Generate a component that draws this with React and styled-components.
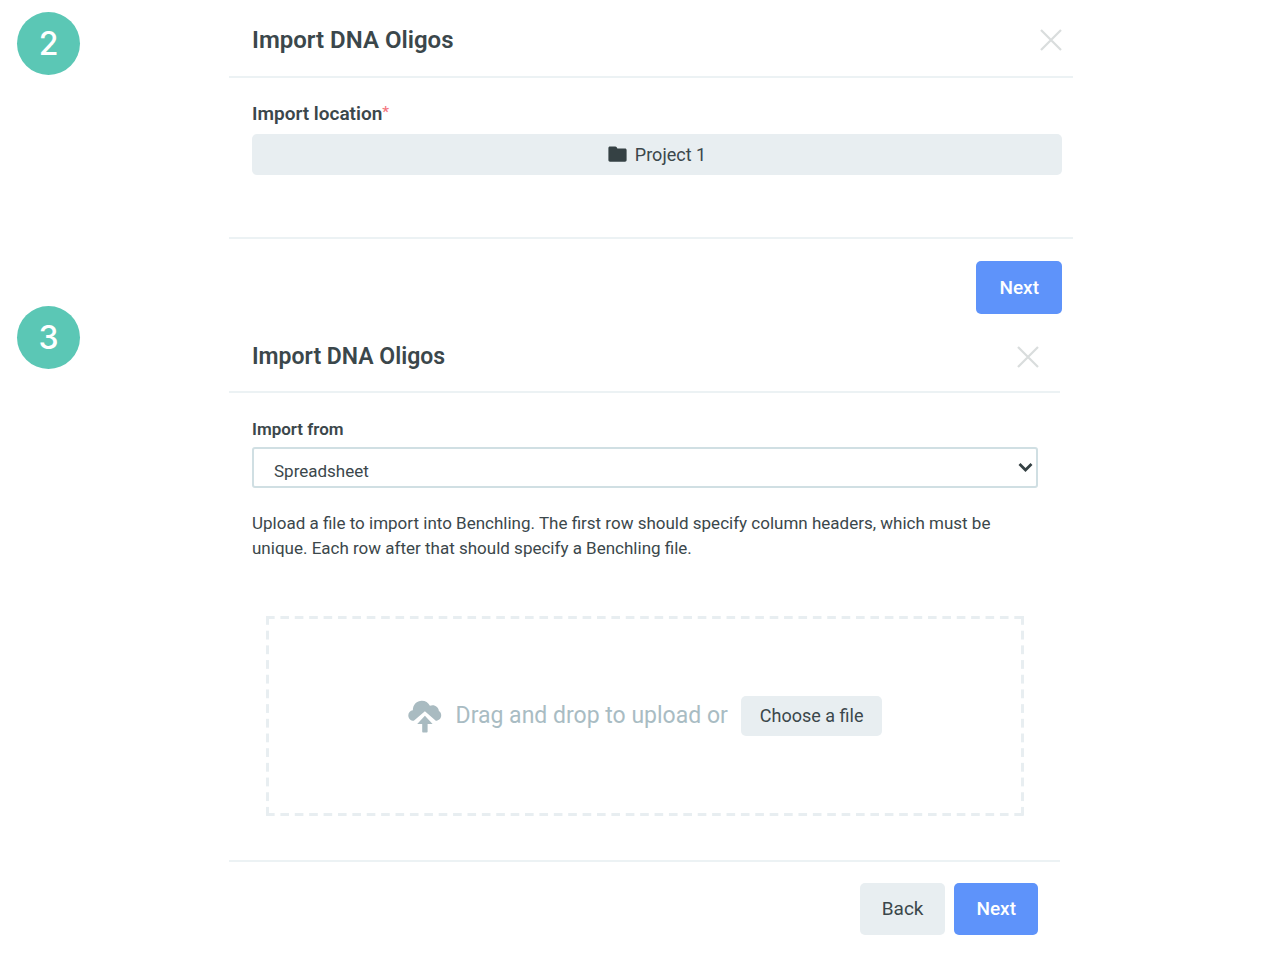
import styled, { createGlobalStyle } from "styled-components";

const GlobalStyle = createGlobalStyle`
  * {
    box-sizing: border-box;
  }
  body {
    margin: 0;
    background: #fff;
    color: #3b474b;
    font-family: Roboto, Lato, sans-serif;
  }
  button,
  select {
    font-family: inherit;
    color: inherit;
  }
`;

const Page = styled.main`
  padding: 12px 0 0 17px;
`;

const Step = styled.section`
  display: flex;
  align-items: flex-start;
  gap: 149px;
  padding-right: ${(props) => props.$end};

  & + & {
    margin-top: -8px;
  }
`;

const Badge = styled.div`
  display: flex;
  align-items: center;
  justify-content: center;
  flex: none;
  width: 63px;
  height: 63px;
  border-radius: 50%;
  background: #5bc7b5;
  color: #fff;
  font-family: Inter, sans-serif;
  font-size: 32px;
  font-weight: 500;
  line-height: 40px;
`;

const Panel = styled.div`
  flex: 1;
  min-width: 0;
`;

const Header = styled.header`
  display: flex;
  align-items: center;
  justify-content: space-between;
  height: ${(props) => props.$height};
  padding: ${(props) => props.$pad};
  border-bottom: 2px solid #ecf2f4;
`;

const Title = styled.h2`
  margin: 0;
  font-size: ${(props) => props.$size};
  font-weight: 600;
  line-height: 30px;
`;

const CloseButton = styled.button`
  display: flex;
  padding: 0;
  border: 0;
  background: none;
  cursor: pointer;
`;

const Body = styled.div`
  padding: ${(props) => props.$pad};
`;

const Label = styled.label`
  display: block;
  margin-bottom: ${(props) => props.$gap};
  font-size: ${(props) => props.$size};
  font-weight: 600;
  line-height: 24px;
`;

const Required = styled.span`
  color: #f4777f;
  font-size: 15px;
  vertical-align: top;
  line-height: 20px;
`;

const LocationButton = styled.button`
  display: flex;
  align-items: center;
  justify-content: center;
  gap: 8px;
  width: 100%;
  height: 41px;
  border: 0;
  border-radius: 5px;
  background: #e8eef1;
  font-size: 18px;
  line-height: 24px;
  cursor: pointer;
`;

const SelectWrap = styled.div`
  position: relative;
`;

const Select = styled.select`
  display: block;
  appearance: none;
  width: 100%;
  height: 41px;
  padding: 6px 40px 0 20px;
  border: 2px solid #d0dfe3;
  border-radius: 3px;
  background: #fff;
  font-size: 17px;
`;

const SelectArrow = styled.svg`
  position: absolute;
  top: 15px;
  right: 5px;
  pointer-events: none;
`;

const Text = styled.p`
  margin: 23px 0 55px;
  font-size: 17px;
  line-height: 25px;
`;

/* dashes are painted as gradients so that they stay longer than the native ones */
const DropZone = styled.div`
  --dash: #e8eef1 9px, transparent 9px;
  --step-x: calc((100% - 9px) / 52);
  --step-y: calc((100% - 9px) / 13);
  display: flex;
  align-items: center;
  justify-content: center;
  height: 200px;
  margin: 0 14px;
  background:
    linear-gradient(90deg, var(--dash)) 0 0 / var(--step-x) 3px repeat-x,
    linear-gradient(90deg, var(--dash)) 0 100% / var(--step-x) 3px repeat-x,
    linear-gradient(180deg, var(--dash)) 0 0 / 3px var(--step-y) repeat-y,
    linear-gradient(180deg, var(--dash)) 100% 0 / 3px var(--step-y) repeat-y;
`;

const DropText = styled.span`
  margin: 0 13px 0 14px;
  color: #a9bcc3;
  font-size: 23px;
  line-height: 30px;
`;

const Button = styled.button`
  height: ${(props) => props.$height || "52px"};
  padding: ${(props) => props.$pad || "0 22px"};
  border: 0;
  border-radius: 5px;
  background: ${(props) => (props.$primary ? "#5e93fa" : "#e8eef1")};
  color: ${(props) => (props.$primary ? "#fff" : "#3b474b")};
  font-size: ${(props) => props.$size || "18px"};
  font-weight: ${(props) => (props.$primary ? 500 : 400)};
  line-height: 24px;
  cursor: pointer;
`;

const Footer = styled.footer`
  display: flex;
  justify-content: flex-end;
  gap: 9px;
  padding: ${(props) => props.$pad};
  border-top: 2px solid #ecf2f4;
`;

const CloseIcon = () => (
  <svg width="22" height="22" viewBox="0 0 22 22" fill="none" stroke="#d9dddd" strokeWidth="2.2">
    <path d="M1 1l20 20M21 1L1 21" />
  </svg>
);

const FolderIcon = () => (
  <svg width="19" height="17" viewBox="0 0 19 17" fill="#354144">
    <path d="M2 .5h5.2c.7 0 1.1.3 1.5.8l.7 1.2H17c1 0 1.6.7 1.6 1.6V14c0 1-.6 1.700-1.600 1.700H2c-1 0-1.600-.7-1.600-1.700V2.100C.4 1.200 1 .5 2 .5z" />
  </svg>
);

const UploadIcon = () => (
  <svg width="34" height="33" viewBox="0 0 34 33" fill="#a9bbc1">
    <path d="M5.8 20.8C2.600 20.800.3 18.500.3 15.500c0-2.800 1.900-4.900 4.500-5.300C5 4.500 8.900.7 13.800.7c3.600 0 6.600 1.900 8.100 5 .8-.3 1.700-.5 2.600-.5 3.400 0 6.100 2.500 6.400 5.700 1.500 1 2.300 2.500 2.300 4.400 0 3.200-2.400 5.500-5.400 5.500L16.900 11.300z" />
    <path d="M16.900 15.800l7.700 8.300h-5v7.300c0 .7-.4 1.100-1.100 1.100h-3.200c-.7 0-1.100-.4-1.100-1.100v-7.300h-5z" />
  </svg>
);

const App = () => {
  return (
    <Page>
      <GlobalStyle />
      <Step $end="203px">
        <Badge>2</Badge>
        <Panel>
          <Header $height="66px" $pad="0 11px 8px 23px">
            <Title $size="24px">Import DNA Oligos</Title>
            <CloseButton aria-label="Close">
              <CloseIcon />
            </CloseButton>
          </Header>
          <Body $pad="24px 11px 62px 23px">
            <Label $size="19px" $gap="8px" htmlFor="location">
              Import location<Required>*</Required>
            </Label>
            <LocationButton id="location">
              <FolderIcon />
              Project 1
            </LocationButton>
          </Body>
          <Footer $pad="22px 11px 0 0">
            <Button $primary $height="53px" $pad="0 23px" $size="19px">
              Next
            </Button>
          </Footer>
        </Panel>
      </Step>
      <Step $end="216px">
        <Badge>3</Badge>
        <Panel>
          <Header $height="87px" $pad="16px 21px 0 23px">
            <Title $size="23px">Import DNA Oligos</Title>
            <CloseButton aria-label="Close">
              <CloseIcon />
            </CloseButton>
          </Header>
          <Body $pad="24px 22px 44px 23px">
            <Label $size="17px" $gap="6px" htmlFor="source">
              Import from
            </Label>
            <SelectWrap>
              <Select id="source" defaultValue="Spreadsheet">
                <option>Spreadsheet</option>
              </Select>
              <SelectArrow width="15" height="11" viewBox="0 0 15 11" fill="none" stroke="#354144" strokeWidth="2.8">
                <path d="M1.5 2l6 6 6-6" />
              </SelectArrow>
            </SelectWrap>
            <Text>
              Upload a file to import into Benchling. The first row should specify column headers, which must be
              unique. Each row after that should specify a Benchling file.
            </Text>
            <DropZone>
              <UploadIcon />
              <DropText>Drag and drop to upload or</DropText>
              <Button $height="40px" $pad="0 19px">
                Choose a file
              </Button>
            </DropZone>
          </Body>
          <Footer $pad="21px 22px 0 0">
            <Button $size="19px">Back</Button>
            <Button $primary $size="19px">
              Next
            </Button>
          </Footer>
        </Panel>
      </Step>
    </Page>
  );
};

export default App;
